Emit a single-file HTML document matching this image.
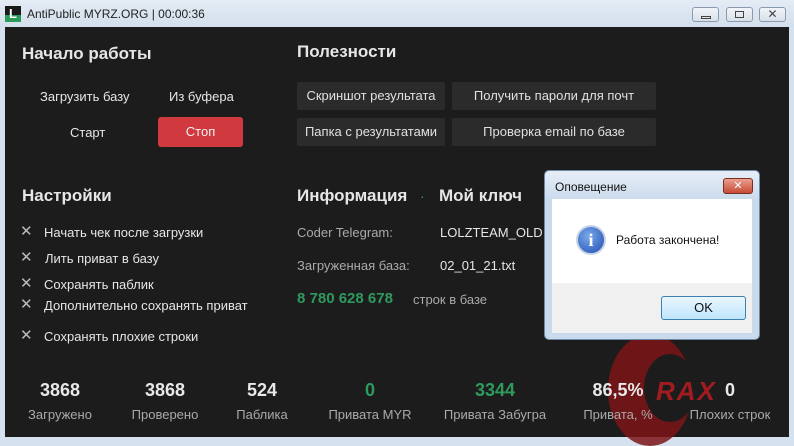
<!DOCTYPE html>
<html><head><meta charset="utf-8"><style>
*{margin:0;padding:0;box-sizing:border-box}
body{width:794px;height:440px;overflow:hidden;background:#d5e1ee;font-family:"Liberation Sans","DejaVu Sans",sans-serif;position:relative}
.a{position:absolute;white-space:nowrap}
#title{left:0;top:0;width:794px;height:27px;background:linear-gradient(#e4ecf5,#d3dfec)}
#main{left:5px;top:27px;width:784px;height:410px;background:#1c1c1c}
.h{font-size:17px;font-weight:bold;color:#e6e6e6}
.t{font-size:13px;color:#e6e6e6}
.g{color:#aaa}
.btn{background:#2b2b2b;color:#e0e0e0;font-size:13px;text-align:center;border-radius:2px;height:28px;line-height:28px}
.x{font-size:15px;color:#bbb}
.num{font-size:18px;font-weight:bold;color:#e8e8e8;text-align:center}
.lbl{font-size:13px;color:#aaa;text-align:center}
.wb{top:7px;width:27px;height:15px;border:1px solid #8a9bb0;border-radius:3px;background:linear-gradient(#f2f5f9,#d8e0ea)}
</style></head><body>
<div class="a" id="title"></div>
<div class="a" style="left:5px;top:6px;width:16px;height:16px;background:#1a1a1a"><div style="position:absolute;left:0;bottom:0;width:16px;height:7px;background:#2a9a5a"></div><span style="position:absolute;left:4px;top:0;color:#fff;font-weight:bold;font-size:13px">L</span></div>
<div class="a" style="left:27px;top:7px;font-size:12px;color:#222">AntiPublic MYRZ.ORG | 00:00:36</div>
<div class="a wb" style="left:692px"><div style="position:absolute;left:8px;top:8px;width:10px;height:3px;border:1px solid #444"></div></div>
<div class="a wb" style="left:726px"><div style="position:absolute;left:8px;top:3px;width:9px;height:7px;border:1px solid #444"></div></div>
<div class="a wb" style="left:759px;font-size:12px;color:#444;text-align:center;line-height:13px">✕</div>
<div class="a" id="main"></div>

<div class="a h" style="left:22px;top:44px">Начало работы</div>
<div class="a t" style="left:40px;top:89px">Загрузить базу</div>
<div class="a t" style="left:169px;top:89px">Из буфера</div>
<div class="a t" style="left:70px;top:125px">Старт</div>
<div class="a" style="left:158px;top:117px;width:85px;height:30px;background:#d0393d;border-radius:3px;color:#f2f2f2;font-size:13px;text-align:center;line-height:30px">Стоп</div>

<div class="a h" style="left:297px;top:42px">Полезности</div>
<div class="a btn" style="left:297px;top:82px;width:148px">Скриншот результата</div>
<div class="a btn" style="left:452px;top:82px;width:204px">Получить пароли для почт</div>
<div class="a btn" style="left:297px;top:118px;width:148px">Папка с результатами</div>
<div class="a btn" style="left:452px;top:118px;width:204px">Проверка email по базе</div>

<div class="a h" style="left:22px;top:186px">Настройки</div>
<div class="a x" style="left:20px;top:222px">✕</div><div class="a t" style="left:44px;top:225px">Начать чек после загрузки</div>
<div class="a x" style="left:20px;top:248px">✕</div><div class="a t" style="left:45px;top:251px">Лить приват в базу</div>
<div class="a x" style="left:20px;top:274px">✕</div><div class="a t" style="left:44px;top:277px">Сохранять паблик</div>
<div class="a x" style="left:20px;top:295px">✕</div><div class="a t" style="left:44px;top:298px">Дополнительно сохранять приват</div>
<div class="a x" style="left:20px;top:326px">✕</div><div class="a t" style="left:44px;top:329px">Сохранять плохие строки</div>

<div class="a h" style="left:297px;top:186px">Информация</div>
<div class="a" style="left:420px;top:188px;color:#2a9a5a;font-size:14px">·</div>
<div class="a h" style="left:439px;top:186px">Мой ключ</div>
<div class="a t g" style="left:297px;top:225px">Coder Telegram:</div>
<div class="a t" style="left:440px;top:225px">LOLZTEAM_OLD</div>
<div class="a t g" style="left:297px;top:258px">Загруженная база:</div>
<div class="a t" style="left:440px;top:258px">02_01_21.txt</div>
<div class="a" style="left:297px;top:290px;font-size:15px;font-weight:bold;color:#2e9a5e">8 780 628 678</div>
<div class="a t g" style="left:413px;top:292px">строк в базе</div>

<div class="a" style="left:608px;top:334px;width:84px;height:112px;border-radius:50%;background:#7d1418;opacity:.85"></div>
<div class="a" style="left:644px;top:354px;width:52px;height:68px;border-radius:50%;background:#1c1c1c"></div>
<div class="a" style="left:656px;top:376px;font-size:26px;font-weight:bold;font-style:italic;color:#a01c20;letter-spacing:2px">RAX</div>

<div class="a num" style="left:20px;top:380px;width:80px">3868</div><div class="a lbl" style="left:10px;top:407px;width:100px">Загружено</div>
<div class="a num" style="left:125px;top:380px;width:80px">3868</div><div class="a lbl" style="left:115px;top:407px;width:100px">Проверено</div>
<div class="a num" style="left:222px;top:380px;width:80px">524</div><div class="a lbl" style="left:212px;top:407px;width:100px">Паблика</div>
<div class="a num" style="left:330px;top:380px;width:80px;color:#2e9a5e">0</div><div class="a lbl" style="left:315px;top:407px;width:110px">Привата MYR</div>
<div class="a num" style="left:455px;top:380px;width:80px;color:#2e9a5e">3344</div><div class="a lbl" style="left:435px;top:407px;width:120px">Привата Забугра</div>
<div class="a num" style="left:578px;top:380px;width:80px">86,5%</div><div class="a lbl" style="left:568px;top:407px;width:100px">Привата, %</div>
<div class="a num" style="left:690px;top:380px;width:80px">0</div><div class="a lbl" style="left:680px;top:407px;width:100px">Плохих строк</div>

<div class="a" style="left:544px;top:170px;width:216px;height:170px;background:linear-gradient(#e6eef7,#c9daec 30px,#c9daec);border:1px solid #6d89a8;border-radius:5px"></div>
<div class="a" style="left:555px;top:180px;font-size:12px;color:#111">Оповещение</div>
<div class="a" style="left:723px;top:178px;width:30px;height:16px;background:linear-gradient(#e9a090,#c74a35);border:1px solid #7a2e22;border-radius:3px;color:#fff;font-size:11px;font-weight:bold;text-align:center;line-height:14px">✕</div>
<div class="a" style="left:552px;top:199px;width:200px;height:84px;background:#fff"></div>
<div class="a" style="left:552px;top:283px;width:200px;height:50px;background:#f0f0f0"></div>
<div class="a" style="left:576px;top:225px;width:30px;height:30px;border-radius:50%;background:radial-gradient(circle at 40% 35%,#7aa8ec,#1d4fb0);border:2px solid #c8d4e6;color:#fff;font-weight:bold;font-size:18px;text-align:center;line-height:26px;font-family:'Liberation Serif',serif">i</div>
<div class="a" style="left:616px;top:233px;font-size:12px;color:#111">Работа закончена!</div>
<div class="a" style="left:661px;top:296px;width:85px;height:24px;border:1px solid #3c7fb1;border-radius:3px;background:linear-gradient(#eaf6fd,#bee6fd);font-size:13px;color:#111;text-align:center;line-height:22px">OK</div>
</body></html>
